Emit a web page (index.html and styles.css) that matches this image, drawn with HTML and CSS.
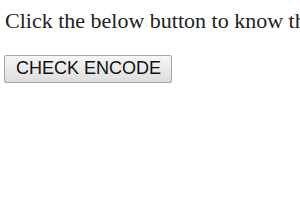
FILE: index.html
```html
<!DOCTYPE html>
<html lang="en">
<head>
    <meta charset="UTF-8">
    <meta name="viewport" content="width=device-width, initial-scale=1.0">
    <title>Check Encode</title>
    <link rel="stylesheet" href="styles.css">
</head>
<body>
    <p class="intro">Click the below button to know the encoding of the document.</p>
    <button class="button" id="checkBtn">CHECK ENCODE</button>
    <p class="result" id="result"></p>
</body>
</html>
```

FILE: styles.css
```css
body {
    font-family: 'Liberation Serif', 'Times New Roman', serif;
    margin: 0;
    padding: 0 4px;
    background-color: #fff;
    color: #222;
    overflow: hidden;
}

.intro {
    font-size: 22px;
    white-space: nowrap;
    margin: 8px 0 21px 1px;
}

.button {
    display: block;
    font-family: 'Liberation Sans', Arial, sans-serif;
    font-size: 18px;
    color: #111;
    padding: 2px 10px 3px 11px;
    background: linear-gradient(#f7f7f7, #dddddd);
    border: 1px solid #a8a8a8;
    border-radius: 2px;
}
```
